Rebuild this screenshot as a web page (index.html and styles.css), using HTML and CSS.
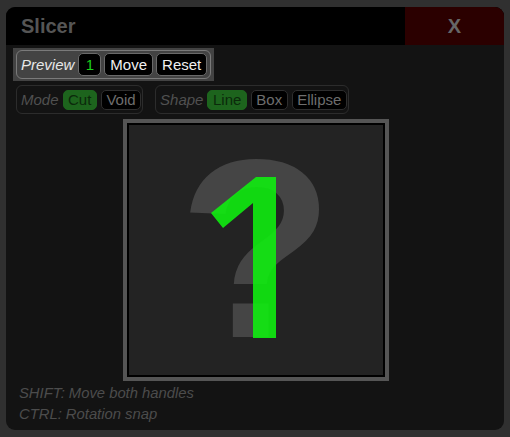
FILE: index.html
```html
<!DOCTYPE html>
<html>
<head>
<meta charset="utf-8">
<link rel="stylesheet" href="styles.css">
</head>
<body>
<div class="window">
  <div class="titlebar">
    <div class="title">Slicer</div>
    <div class="close">X</div>
  </div>
  <div class="content">
    <div class="preview-band">
      <div class="group preview-group">
        <span class="label light">Preview</span>
        <button class="btn big num">1</button>
        <button class="btn big">Move</button>
        <button class="btn big">Reset</button>
      </div>
    </div>
    <div class="row">
      <div class="group dim-group">
        <span class="label">Mode</span>
        <button class="btn small on">Cut</button>
        <button class="btn small">Void</button>
      </div>
      <div class="group dim-group">
        <span class="label">Shape</span>
        <button class="btn small on">Line</button>
        <button class="btn small">Box</button>
        <button class="btn small">Ellipse</button>
      </div>
    </div>
    <div class="canvas-wrap">
      <div class="canvas">
        <svg width="254" height="250" viewBox="0 0 254 250">
          <text x="127" y="212" text-anchor="middle" class="qmark">?</text>
          <polygon class="one" points="127,52 147,52 147,213 124,213 124,78 94,103 82,88"/>
        </svg>
      </div>
    </div>
    <div class="hints">
      <div>SHIFT: Move both handles</div>
      <div>CTRL: Rotation snap</div>
    </div>
  </div>
</div>
</body>
</html>
```
FILE: styles.css
```css
* { box-sizing: border-box; }
html, body { margin: 0; padding: 0; }
body {
  background: #303030;
  padding: 7px 6px;
  font-family: "Liberation Sans", Arial, sans-serif;
}
.window {
  width: 498px;
  height: 423px;
  background: #131313;
  border-radius: 9px;
  overflow: hidden;
}
.titlebar {
  display: flex;
  height: 38px;
  background: #000;
}
.title {
  flex: 1;
  padding-left: 15px;
  font-size: 20px;
  font-weight: bold;
  line-height: 38px;
  color: #555;
}
.close {
  width: 99px;
  background: #2b0000;
  color: #666;
  font-size: 20px;
  font-weight: bold;
  line-height: 38px;
  text-align: center;
}
.content {
  padding: 3px 7px 0;
}
.preview-band {
  display: inline-flex;
  background: #434343;
  padding: 2px 3px;
}
.group {
  display: flex;
  align-items: center;
  height: 29px;
  border-radius: 6px;
}
.preview-group {
  border: 1px solid #7a7a7a;
  padding: 0 3px 0 4px;
  gap: 3px;
}
.label {
  font-style: italic;
  font-size: 15px;
  color: #505050;
}
.label.light { color: #e8e8e8; margin-right: 1px; }
.btn {
  font-family: "Liberation Sans", Arial, sans-serif;
  font-size: 15px;
  margin: 0;
  padding: 0 5px;
  background: #000;
  border-radius: 5px;
}
.btn.big {
  height: 23px;
  line-height: 21px;
  border: 1px solid #6a6a6a;
  color: #f0f0f0;
}
.btn.num {
  min-width: 23px;
  color: #1bd21b;
}
.row {
  display: flex;
  gap: 12px;
  margin-top: 4px;
  padding-left: 3px;
}
.dim-group {
  border: 1px solid #2c2c2c;
  padding: 0 1px 0 4px;
  gap: 4px;
}
.btn.small {
  height: 20px;
  line-height: 18px;
  padding: 0 4.5px;
  border: 1px solid #2e2e2e;
  color: #6e6e6e;
}
.btn.small.on {
  background: #1d641d;
  border-color: #1d641d;
  color: #0b2a0b;
}
.canvas-wrap {
  display: flex;
  justify-content: center;
  margin-top: 5px;
  padding-left: 2px;
}
.canvas {
  border: 4px solid #555;
  background: #000;
  padding: 2px;
}
.canvas svg {
  display: block;
  background: #232323;
}
.qmark {
  font-family: "Liberation Sans", Arial, sans-serif;
  font-weight: bold;
  font-size: 254px;
  fill: #454545;
}
.one {
  fill: #10ec10;
  opacity: 0.9;
}
.hints {
  padding: 2px 0 0 6px;
  font-size: 14.8px;
  font-style: italic;
  line-height: 21px;
  color: #4c4c4c;
}
```
